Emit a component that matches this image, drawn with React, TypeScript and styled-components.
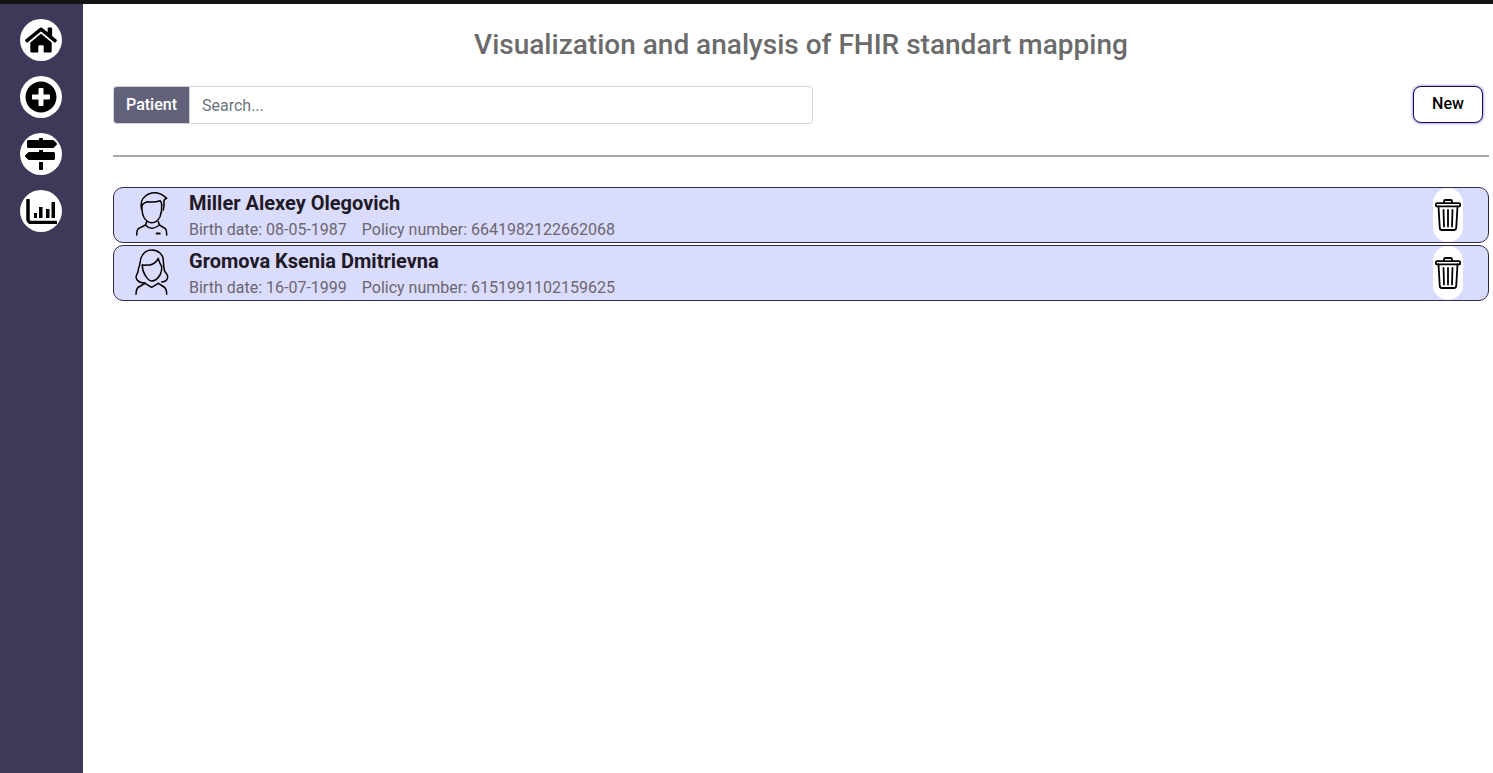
import React from 'react';
import styled, { createGlobalStyle } from 'styled-components';
import { FaHome, FaPlusCircle, FaMapSigns } from 'react-icons/fa';

const GlobalStyle = createGlobalStyle`
  html, body {
    margin: 0;
    padding: 0;
    height: 100%;
    background: #fff;
    font-family: Roboto, "Liberation Sans", sans-serif;
  }
  * { box-sizing: border-box; }
`;

const S_Page = styled.div`
  display: flex;
  flex-direction: column;
  width: 100%;
  height: 773px;
  overflow: hidden;
  border-top: 4px solid #141414;
`;

const S_Body = styled.div`
  display: flex;
  flex: 1;
  min-height: 0;
`;

const S_Sidebar = styled.nav`
  display: flex;
  flex-direction: column;
  align-items: center;
  gap: 15px;
  flex: 0 0 83px;
  padding: 15px 1px 0 0;
  background: #3c3a58;
`;

const S_NavButton = styled.a`
  display: flex;
  align-items: center;
  justify-content: center;
  width: 42px;
  height: 42px;
  border-radius: 50%;
  background: #fff;
  color: #000;
  font-size: 32px;
`;

const S_Main = styled.main`
  flex: 1;
  min-width: 0;
  padding: 0 4px 0 30px;
`;

const S_Title = styled.h1`
  margin: 0;
  padding-top: 24px;
  height: 82px;
  text-align: center;
  font-size: 28px;
  line-height: 34px;
  font-weight: 500;
  color: #6b6b6b;
`;

const S_Toolbar = styled.div`
  display: flex;
  justify-content: space-between;
  align-items: flex-start;
  padding-right: 6px;
`;

const S_SearchGroup = styled.div`
  display: flex;
  width: 700px;
  height: 38px;
`;

const S_SearchLabel = styled.span`
  display: flex;
  align-items: center;
  justify-content: center;
  flex: 0 0 76px;
  padding-bottom: 1px;
  border: 1px solid #ced4da;
  border-right: 0;
  border-radius: 4px 0 0 4px;
  background: #62617a;
  color: #fff;
  font-size: 16px;
  font-weight: 500;
`;

const S_SearchInput = styled.input`
  flex: 1;
  min-width: 0;
  padding: 0 12px;
  border: 1px solid #ced4da;
  border-radius: 0 4px 4px 0;
  outline: none;
  font-family: inherit;
  font-size: 16px;
  color: #495057;

  &::placeholder {
    color: #6c757d;
    opacity: 1;
  }
`;

const S_NewButton = styled.button`
  width: 70px;
  height: 37px;
  padding: 0 0 3px;
  border: 1px solid #1b0a5c;
  border-radius: 8px;
  background: #fff;
  box-shadow: 0 0 3px rgba(60, 40, 180, 0.8);
  font-family: inherit;
  font-size: 16px;
  font-weight: 500;
  color: #000;
`;

const S_Divider = styled.hr`
  height: 2px;
  margin: 31px 0 30px;
  border: 0;
  background: #a9a8ad;
`;

const S_List = styled.div`
  display: flex;
  flex-direction: column;
  gap: 2px;
`;

const S_Row = styled.div`
  display: flex;
  align-items: center;
  height: 56px;
  padding-left: 17px;
  padding-right: 25px;
  border: 1px solid #2f2c4a;
  border-radius: 10px;
  background: #dadcfd;
`;

const S_Avatar = styled.svg`
  flex: 0 0 40px;
  width: 40px;
  height: 48px;
  margin-right: 18px;
`;

const S_Details = styled.div`
  flex: 1;
  min-width: 0;
`;

const S_Name = styled.div`
  font-size: 20px;
  line-height: 24px;
  font-weight: 700;
  color: #211a26;
`;

const S_Meta = styled.div`
  display: flex;
  gap: 15px;
  margin-top: 5px;
  font-size: 16px;
  line-height: 20px;
  color: #6b6670;
`;

const S_DeleteButton = styled.button`
  display: flex;
  align-items: center;
  justify-content: center;
  width: 30px;
  height: 54px;
  padding: 0;
  border: 0;
  border-radius: 15px;
  background: #fff;
`;

const ChartIcon = () => (
  <svg width="31" height="25" viewBox="0 0 31 25">
    <path d="M2 1v19.500a3 3 0 0 0 3 3h25" fill="none" stroke="#000" strokeWidth="3.500" strokeLinecap="round" />
    <rect x="8" y="14" width="3" height="5" fill="#000" />
    <rect x="13" y="8" width="3.500" height="11" fill="#000" />
    <rect x="20" y="10" width="3.500" height="9" fill="#000" />
    <rect x="25.500" y="3" width="3.500" height="16" fill="#000" />
  </svg>
);

const TrashIcon = () => (
  <svg width="26" height="32" viewBox="0 0 26 32" fill="none" stroke="#000" strokeWidth="1.800" strokeLinecap="round" strokeLinejoin="round">
    <path d="M9 4V2.200C9 1.500 9.500 1 10.200 1h5.600c.7 0 1.200.5 1.200 1.200V4" />
    <path d="M2 4.200h22c.7 0 1.100.5 1.100 1.100v1.400c0 .4-.3.7-.7.7H1.600c-.4 0-.7-.3-.7-.7V5.300c0-.6.5-1.100 1.100-1.100z" />
    <path d="M3.500 7.500l1.300 21.700c.1 1 .9 1.800 1.900 1.800h12.600c1 0 1.800-.8 1.900-1.800l1.300-21.700" />
    <path d="M8.500 11l.5 16.500M13 11v16.500M17.500 11L17 27.500" />
  </svg>
);

const MaleAvatar = () => (
  <S_Avatar viewBox="0 0 40 48" fill="none" stroke="#000" strokeWidth="1.500" strokeLinecap="round" strokeLinejoin="round">
    <path d="M10.500 18C9.500 13 10.500 8 14 5.500 17 2.500 21 1.500 24.500 1.700c3.500.2 7 1.300 11.200 5.600-2 .7-3 1.500-2.700 3.200.3 3-.1 6-.8 8.500" />
    <path d="M11 14c2-2.300 4-3.300 6.300-3.300 4 .5 8 .3 11.700-1 1.500 1 1.700 2.800 1.700 4.300" />
    <path d="M11 14c-.3 5 .2 9 2 12.500 2 3.500 5 5.200 7.700 5.200 3 0 6.500-2.200 8.300-6 1.500-3.500 1.900-7.700 1.700-11.700" />
    <path d="M15.700 30.700L14.500 34 7.800 37.300C6 38.400 5.700 41 5.700 44" />
    <path d="M27.300 30.700L28.500 34l5.500 3.300c1.400 1 1.700 3.700 1.700 6.700" />
    <path d="M14.500 34c2 2.200 4 3.300 6.200 3.300s4.800-1.300 7.800-3.300" />
    <path d="M25.700 42.500h3" strokeWidth="2" />
  </S_Avatar>
);

const FemaleAvatar = () => (
  <S_Avatar viewBox="0 0 40 48" fill="none" stroke="#000" strokeWidth="1.500" strokeLinecap="round" strokeLinejoin="round">
    <path d="M14 34c-3.500 0-7.500-1-8.800-5-.8-3 2.100-4.500 2.100-8 0-2.500 1.500-4 1.700-7C9.500 6 14.500 1 20.700 1c6.800 0 11.300 4.500 11.600 10 .2 3.500.3 7 1 10 .5 2.500 3.400 4 3.400 6.700 0 3.500-3 5-6 5.300" />
    <path d="M11.300 16c3 .5 6-.2 7.700 0 3.500-1 6.500-3 8.300-6.700.7 3 2 6 3.400 8.400" />
    <path d="M11.300 16c0 4 1 7.500 2.700 10 2 3.500 4.500 6 6.700 6 3 0 6.500-3 8.300-6 1.500-2.500 1.900-5.500 1.700-8.300" />
    <path d="M14 34.300L7.700 38C5.700 39.300 5 42 5 45.300" />
    <path d="M27.300 34.300L33 38c2 1.300 2.700 4 2.700 7.300" />
    <path d="M14 34.300l6.700 4 6.600-4" />
  </S_Avatar>
);

type Patient = {
  name: string;
  birthDate: string;
  policy: string;
  avatar: React.ReactNode;
};

const patients: Patient[] = [
  { name: 'Miller Alexey Olegovich', birthDate: '08-05-1987', policy: '6641982122662068', avatar: <MaleAvatar /> },
  { name: 'Gromova Ksenia Dmitrievna', birthDate: '16-07-1999', policy: '6151991102159625', avatar: <FemaleAvatar /> },
];

export default function App() {
  return (
    <>
      <GlobalStyle />
      <S_Page>
        <S_Body>
          <S_Sidebar>
            <S_NavButton><FaHome /></S_NavButton>
            <S_NavButton><FaPlusCircle /></S_NavButton>
            <S_NavButton><FaMapSigns /></S_NavButton>
            <S_NavButton><ChartIcon /></S_NavButton>
          </S_Sidebar>
          <S_Main>
            <S_Title>Visualization and analysis of FHIR standart mapping</S_Title>
            <S_Toolbar>
              <S_SearchGroup>
                <S_SearchLabel>Patient</S_SearchLabel>
                <S_SearchInput placeholder="Search..." />
              </S_SearchGroup>
              <S_NewButton>New</S_NewButton>
            </S_Toolbar>
            <S_Divider />
            <S_List>
              {patients.map(p => (
                <S_Row key={p.policy}>
                  {p.avatar}
                  <S_Details>
                    <S_Name>{p.name}</S_Name>
                    <S_Meta>
                      <span>Birth date: {p.birthDate}</span>
                      <span>Policy number: {p.policy}</span>
                    </S_Meta>
                  </S_Details>
                  <S_DeleteButton><TrashIcon /></S_DeleteButton>
                </S_Row>
              ))}
            </S_List>
          </S_Main>
        </S_Body>
      </S_Page>
    </>
  );
}
